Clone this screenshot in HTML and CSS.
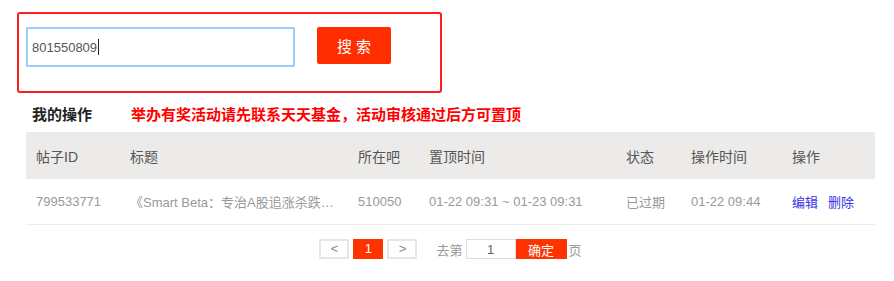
FILE: index.html
```html
<!DOCTYPE html>
<html lang="zh-CN">
<head>
    <meta charset="UTF-8">
    <title>我的操作</title>
    <link rel="stylesheet" href="styles.css">
</head>
<body>
    <div class="page">
        <!-- Search box -->
        <div class="search-box">
            <input type="text" class="search-input" value="801550809"><span class="caret"></span>
            <button type="button" class="search-btn">搜索</button>
        </div>

        <!-- Title row -->
        <div class="section-title">
            <span class="title-main">我的操作</span>
            <span class="title-tip">举办有奖活动请先联系天天基金，活动审核通过后方可置顶</span>
        </div>

        <!-- Records -->
        <table class="records">
            <colgroup>
                <col style="width: 94px">
                <col style="width: 228px">
                <col style="width: 71px">
                <col style="width: 197px">
                <col style="width: 65px">
                <col style="width: 101px">
                <col style="width: 93px">
            </colgroup>
            <thead>
                <tr>
                    <th>帖子ID</th>
                    <th>标题</th>
                    <th>所在吧</th>
                    <th>置顶时间</th>
                    <th>状态</th>
                    <th>操作时间</th>
                    <th>操作</th>
                </tr>
            </thead>
            <tbody>
                <tr>
                    <td>799533771</td>
                    <td>《Smart Beta：专治A股追涨杀跌…</td>
                    <td>510050</td>
                    <td>01-22 09:31 ~ 01-23 09:31</td>
                    <td>已过期</td>
                    <td>01-22 09:44</td>
                    <td><a href="#" class="op">编辑</a><a href="#" class="op">删除</a></td>
                </tr>
            </tbody>
        </table>

        <!-- Pager -->
        <div class="pager">
            <a href="#" class="pg-btn">&lt;</a>
            <a href="#" class="pg-btn pg-current">1</a>
            <a href="#" class="pg-btn">&gt;</a>
            <span class="pg-label goto">去第</span>
            <input type="text" class="pg-input" value="1">
            <button type="button" class="pg-go">确定</button>
            <span class="pg-label">页</span>
        </div>
    </div>
</body>
</html>
```

FILE: styles.css
```css
/* General Styles */
body {
    margin: 0;
    padding: 0;
    background-color: #fff;
    font-family: "Liberation Sans", Arial, "Noto Sans CJK SC", sans-serif;
    font-size: 13px;
    color: #555;
}

.page {
    width: 849px;
    padding: 12px 0 0 26px;
}

/* Search box */
.search-box {
    display: flex;
    align-items: flex-start;
    width: 421px;
    height: 77px;
    margin-left: -9px;
    padding: 0;
    border: 2px solid #ff1e1e;
    border-radius: 3px;
}

.search-input {
    box-sizing: border-box;
    width: 269px;
    height: 40px;
    margin: 13px 0 0 7px;
    padding: 0 4px;
    border: 2px solid #9fcdf5;
    border-radius: 1px;
    outline: none;
    font-family: "Liberation Sans", Arial, sans-serif;
    font-size: 13px;
    color: #555;
}

.caret {
    width: 1px;
    height: 16px;
    margin: 25px 0 0 -197px;
    background-color: #222;
}

.search-btn {
    width: 74px;
    height: 37px;
    margin: 13px 0 0 218px;
    padding: 0 0 0 4px;
    border: none;
    border-radius: 2px;
    background-color: #ff2d00;
    color: #fff;
    font-family: "Liberation Sans", "Noto Sans CJK SC", sans-serif;
    font-size: 15px;
    letter-spacing: 4px;
    cursor: pointer;
}

/* Title row */
.section-title {
    display: flex;
    align-items: center;
    height: 20px;
    padding: 10px 0 9px 6px;
    font-size: 15px;
    font-weight: bold;
}

.title-main {
    color: #222;
}

.title-tip {
    margin-left: 39px;
    color: #ff0000;
}

/* Records table */
.records {
    width: 849px;
    table-layout: fixed;
    border-collapse: collapse;
}

.records th {
    height: 47px;
    padding: 0 10px;
    background-color: #edebe9;
    font-size: 14px;
    font-weight: normal;
    color: #555;
    text-align: left;
}

.records td {
    height: 45px;
    padding: 0 10px;
    border-bottom: 1px solid #ececec;
    font-size: 13px;
    color: #999;
    white-space: nowrap;
}

.op {
    margin-right: 10px;
    color: #3a33e6;
    text-decoration: none;
}

/* Pager */
.pager {
    display: flex;
    justify-content: center;
    align-items: center;
    margin-top: 14px;
    font-size: 13px;
}

.pg-btn {
    box-sizing: border-box;
    width: 30px;
    height: 20px;
    margin-right: 4px;
    border: 2px solid #e6e6e6;
    color: #888;
    line-height: 16px;
    text-align: center;
    text-decoration: none;
}

.pg-current {
    border-color: #ff3300;
    background-color: #ff3300;
    color: #fff;
}

.pg-label {
    color: #999;
}

.goto {
    margin: 0 3px 0 15px;
}

.pg-input {
    box-sizing: border-box;
    width: 50px;
    height: 20px;
    padding: 0;
    border: 1px solid #ddd;
    outline: none;
    font-family: "Liberation Sans", Arial, sans-serif;
    font-size: 13px;
    color: #666;
    text-align: center;
}

.pg-go {
    width: 51px;
    height: 20px;
    margin-right: 2px;
    padding: 0;
    border: none;
    background-color: #ff3300;
    color: #fff;
    font-family: "Liberation Sans", "Noto Sans CJK SC", sans-serif;
    font-size: 13px;
}
```
